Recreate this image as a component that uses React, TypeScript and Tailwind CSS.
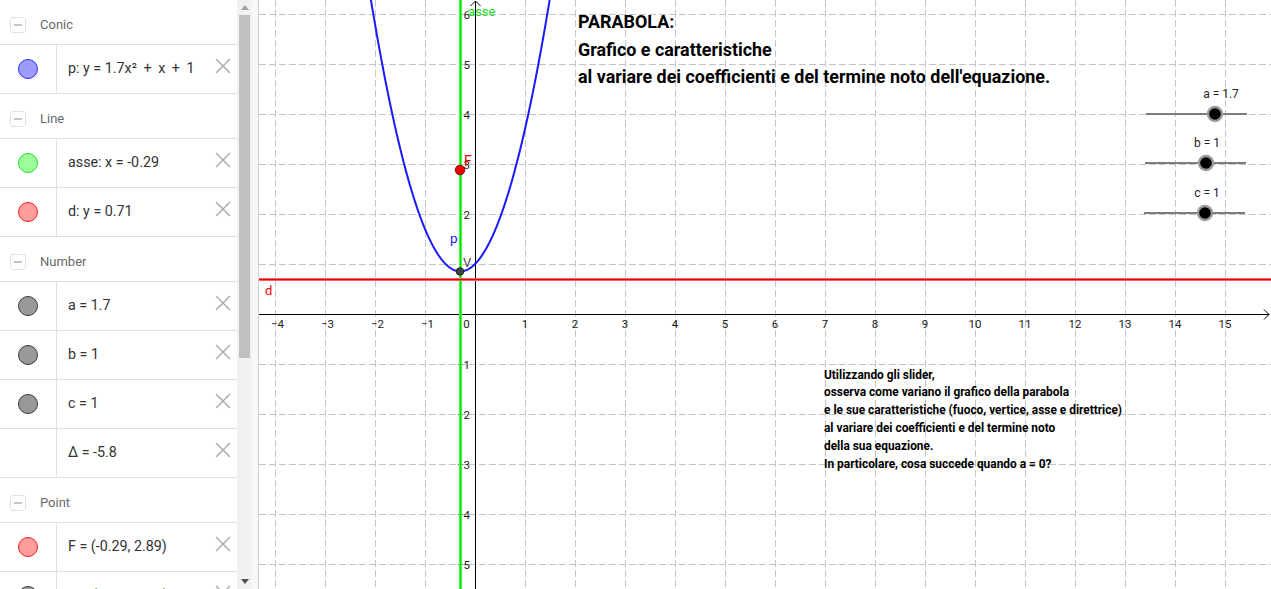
import React from "react";

type Dot = "blue" | "green" | "red" | "gray" | "none";

const DOT_CLASSES: Record<Dot, string> = {
  blue: "bg-[#9c9cff] border-[#2b2bff]",
  green: "bg-[#9cff9c] border-[#22dd22]",
  red: "bg-[#ff9c9c] border-[#ee2222]",
  gray: "bg-[#999999] border-[#3a3a3a]",
  none: "",
};

const SECTIONS: { title: string; items: { dot: Dot; text: string }[] }[] = [
  { title: "Conic", items: [{ dot: "blue", text: "p: y = 1.7x² + x + 1" }] },
  {
    title: "Line",
    items: [
      { dot: "green", text: "asse: x = -0.29" },
      { dot: "red", text: "d: y = 0.71" },
    ],
  },
  {
    title: "Number",
    items: [
      { dot: "gray", text: "a = 1.7" },
      { dot: "gray", text: "b = 1" },
      { dot: "gray", text: "c = 1" },
      { dot: "none", text: "Δ = -5.8" },
    ],
  },
  {
    title: "Point",
    items: [
      { dot: "red", text: "F = (-0.29, 2.89)" },
      { dot: "gray", text: "V = (-0.29, 0.85)" },
    ],
  },
];

// graph origin and scale (page pixels)
const OX = 475;
const OY = 314;
const U = 50;

const px = (x: number) => OX + x * U;
const py = (y: number) => OY - y * U;

function parabolaPath() {
  const pts: string[] = [];
  for (let x = -2.25; x <= 1.65; x += 0.01) {
    const y = 1.7 * x * x + x + 1;
    pts.push(`${px(x).toFixed(2)},${py(y).toFixed(2)}`);
  }
  return "M" + pts.join(" L");
}

function CloseIcon() {
  return (
    <svg width="16" height="16" viewBox="0 0 16 16" className="shrink-0">
      <path d="M1 1 15 15 M15 1 1 15" stroke="#b0b0b0" strokeWidth="1.6" fill="none" />
    </svg>
  );
}

// math-style rendering: wider space around "+"
function ItemText({ text }: { text: string }) {
  if (!text.includes("+")) return <>{text}</>;
  const parts = text.split(" + ");
  return (
    <>
      {parts.map((part, i) => (
        <React.Fragment key={i}>
          {i > 0 && <span className="mx-[3px]"> + </span>}
          {part}
        </React.Fragment>
      ))}
    </>
  );
}

function AlgebraPanel() {
  return (
    <div className="flex h-full w-[259px] shrink-0 border-r border-[#d4d4d4] bg-[#f7f7f7]">
      <div className="h-full w-[237px] overflow-hidden bg-white">
        {SECTIONS.map((section) => (
          <div key={section.title}>
            <div className="flex h-[45px] items-center border-b border-[#e0e0e0] pt-[5px]">
              <div className="ml-[10px] flex h-[16px] w-[16px] items-center justify-center rounded-[3px] border border-[#e2e2e2]">
                <div className="h-[2px] w-[8px] bg-[#c4c4c4]" />
              </div>
              <span className="ml-[14px] text-[13px] text-[#6a6a6a]">{section.title}</span>
            </div>
            {section.items.map((item) => (
              <div key={item.text} className="flex h-[49px] items-stretch border-b border-[#e0e0e0]">
                <div className="flex w-[57px] shrink-0 items-center justify-center border-r border-[#e0e0e0] pr-px">
                  {item.dot !== "none" && (
                    <div className={`h-[20px] w-[20px] rounded-full border ${DOT_CLASSES[item.dot]}`} />
                  )}
                </div>
                <div className="flex flex-1 items-center whitespace-pre pl-[11px] text-[14.3px] text-[#333333]">
                  <ItemText text={item.text} />
                </div>
                <div className="flex items-center pr-[6px] pb-[6px]">
                  <CloseIcon />
                </div>
              </div>
            ))}
          </div>
        ))}
      </div>
      <div className="flex h-full w-[15px] flex-col bg-[#f1f1f1]">
        <div className="flex h-[15px] items-center justify-center">
          <svg width="8" height="5" viewBox="0 0 8 5">
            <path d="M0 5 4 0 8 5Z" fill="#a3a3a3" />
          </svg>
        </div>
        <div className="mx-[2px] h-[343px] bg-[#c1c1c1]" />
        <div className="flex-1" />
        <div className="flex h-[15px] items-center justify-center">
          <svg width="8" height="5" viewBox="0 0 8 5">
            <path d="M0 0 8 0 4 5Z" fill="#505050" />
          </svg>
        </div>
      </div>
    </div>
  );
}

function Slider({ y, x1, knob, labelX, label }: { y: number; x1: number; knob: number; labelX: number; label: string }) {
  return (
    <g>
      <text x={labelX} y={y - 16} textAnchor="middle" fontSize="12" fill="#222">
        {label}
      </text>
      <line x1={x1} y1={y} x2={x1 + 101} y2={y} stroke="#7c7c7c" strokeWidth="2.2" />
      <circle cx={knob} cy={y} r="8.2" fill="#9a9a9a" />
      <circle cx={knob} cy={y} r="5.8" fill="#000" />
    </g>
  );
}

function Graph() {
  const xs: number[] = [];
  for (let k = -4; k <= 15; k++) xs.push(k);
  const ys: number[] = [];
  for (let k = -5; k <= 6; k++) ys.push(k);

  const topLines = [
    "PARABOLA:",
    "Grafico e caratteristiche",
    "al variare dei coefficienti e del termine noto dell'equazione.",
  ];
  const bottomLines = [
    "Utilizzando gli slider,",
    "osserva come variano il grafico della parabola",
    "e le sue caratteristiche (fuoco, vertice, asse e direttrice)",
    "al variare dei coefficienti e del termine noto",
    "della sua equazione.",
    "In particolare, cosa succede quando a = 0?",
  ];

  return (
    <div className="h-full flex-1 overflow-hidden bg-white">
      <svg width="1012" height="589" viewBox="259 0 1012 589" fontFamily="Roboto, sans-serif">
        {/* grid */}
        {xs.map((k) =>
          k === 0 ? null : (
            <line key={`gx${k}`} x1={px(k) + 0.5} y1="0" x2={px(k) + 0.5} y2="589" stroke="#c4c4c4" strokeDasharray="7 3" />
          )
        )}
        {ys.map((k) =>
          k === 0 ? null : (
            <line key={`gy${k}`} x1="259" y1={py(k) + 0.5} x2="1271" y2={py(k) + 0.5} stroke="#c4c4c4" strokeDasharray="7 3" />
          )
        )}

        {/* axes */}
        <line x1="259" y1={OY + 0.5} x2="1269" y2={OY + 0.5} stroke="#000" strokeWidth="1" />
        <path d={`M1264 ${OY - 4.5} L1269 ${OY + 0.5} L1264 ${OY + 5.5}`} stroke="#000" fill="none" />
        <line x1={OX + 0.5} y1="1" x2={OX + 0.5} y2="589" stroke="#000" strokeWidth="1" />
        <path d={`M${OX - 4.5} 6 L${OX + 0.5} 1 L${OX + 5.5} 6`} stroke="#000" fill="none" />

        {/* tick labels */}
        {xs.map((k) => (
          <text
            key={`lx${k}`}
            x={k === 0 ? OX - 8.5 : k < 0 ? px(k) + 2.5 : px(k)}
            y="328"
            textAnchor="middle"
            fontSize="11.5"
            fill="#222"
          >
            {k < 0 ? `\u2212${-k}` : k}
          </text>
        ))}
        {ys.map((k) =>
          k === 0 || k === 1 ? null : (
            <text key={`ly${k}`} x={OX - 5} y={py(k) + 4.5} textAnchor="end" fontSize="11.5" fill="#222">
              {k < 0 ? `\u2212${-k}` : k}
            </text>
          )
        )}

        {/* axis of symmetry and directrix */}
        <line x1="460.5" y1="0" x2="460.5" y2="589" stroke="#70ff70" strokeWidth="3.2" />
        <line x1="460.5" y1="0" x2="460.5" y2="589" stroke="#00e000" strokeWidth="1.6" />
        <line x1="259" y1="279.5" x2="1271" y2="279.5" stroke="#ff8080" strokeWidth="3" />
        <line x1="259" y1="279.5" x2="1271" y2="279.5" stroke="#ee0000" strokeWidth="1.4" />

        {/* parabola */}
        <path d={parabolaPath()} stroke="#1a1aff" strokeWidth="2" fill="none" />

        {/* points */}
        <circle cx="460" cy="170" r="4.8" fill="#ee0000" stroke="#600" strokeWidth="0.8" />
        <circle cx="460" cy="271.5" r="3.8" fill="#444" stroke="#111" strokeWidth="0.8" />

        {/* object labels */}
        <text x="468" y="16" fontSize="13" fill="#22dd22">asse</text>
        <text x="464" y="166" fontSize="14" fill="#ee0000">F</text>
        <text x="450" y="243" fontSize="13.5" fill="#1a1aff">p</text>
        <text x="463" y="267" fontSize="13" fill="#444">V</text>
        <text x="265" y="295" fontSize="13" fill="#ee0000">d</text>

        {/* title */}
        {topLines.map((line, i) => (
          <text key={line} x="578" y={28 + i * 27.5} fontSize="17.9" fontWeight="700" fill="#000">
            {line}
          </text>
        ))}

        {/* sliders */}
        <Slider y={114} x1={1146} knob={1215} labelX={1221} label="a = 1.7" />
        <Slider y={163} x1={1145} knob={1206} labelX={1207} label="b = 1" />
        <Slider y={213} x1={1144} knob={1205} labelX={1207} label="c = 1" />

        {/* instructions */}
        {bottomLines.map((line, i) => (
          <text key={line} x="824" y={378.5 + i * 17.9} fontSize="11.9" fontWeight="700" fill="#000">
            {line}
          </text>
        ))}
      </svg>
    </div>
  );
}

export default function App() {
  return (
    <div className="flex h-[589px] w-[1271px] overflow-hidden bg-white font-[family-name:Roboto,sans-serif]">
      <AlgebraPanel />
      <Graph />
    </div>
  );
}
